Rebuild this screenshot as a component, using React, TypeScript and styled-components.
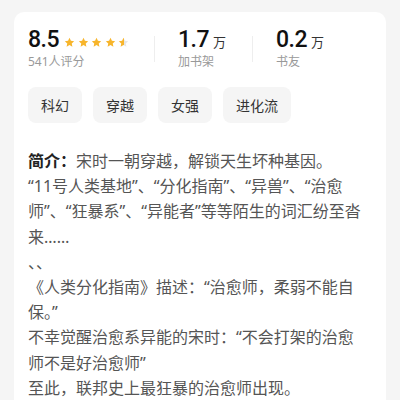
import React from 'react'
import styled, { createGlobalStyle } from 'styled-components'

const GlobalStyle = createGlobalStyle`
  body {
    margin: 0;
    background: #f5f5f5;
    font-family: "Noto Sans", "Noto Sans CJK SC", sans-serif;
  }
`
const Page = styled.div`
  padding: 12px 14px 0 14px;
`
const Card = styled.div`
  background: #fff;
  border-radius: 10px;
  padding: 14px 14px 20px 14px;
`
const StatsRow = styled.div`
  display: flex;
  align-items: center;
  padding-top: 2px;
`
const Stat = styled.div<{ $w?: number }>`
  width: ${p => (p.$w ? `${p.$w}px` : 'auto')};
  display: flex;
  flex-direction: column;
`
const Divider = styled.div`
  width: 1px;
  height: 26px;
  background: #eeeeee;
  margin-right: 23px;
`
const ValueLine = styled.div`
  display: flex;
  align-items: baseline;
  height: 24px;
`
const Value = styled.span`
  font-family: Roboto, sans-serif;
  font-weight: 500;
  font-size: 23px;
  line-height: 24px;
  color: #111;
  letter-spacing: -0.5px;
`
const Unit = styled.span`
  font-size: 13px;
  line-height: 18px;
  color: #333;
  margin-left: 4px;
`
const Label = styled.div`
  font-size: 12px;
  color: #999;
  margin-top: 2px;
  line-height: 16px;
`
const Stars = styled.div`
  display: flex;
  gap: 2.5px;
  margin-left: 5px;
  align-self: center;
  margin-top: 4px;
`
const Tags = styled.div`
  display: flex;
  gap: 11px;
  margin-top: 17px;
`
const Tag = styled.div`
  height: 36px;
  padding: 0 13px;
  border-radius: 8px;
  background: #f5f5f5;
  color: #333;
  font-size: 14px;
  display: flex;
  align-items: center;
`
const Intro = styled.div`
  margin-top: 25px;
  padding-right: 4px;
  font-size: 16px;
  line-height: 25.2px;
  color: #555;
  white-space: pre-wrap;
`
const IntroHead = styled.span`
  color: #222;
  font-weight: 700;
  font-family: "Noto Sans CJK SC", sans-serif;
`

function Star({ half = false }: { half?: boolean }) {
  return (
    <svg width="11" height="11" viewBox="0 0 24 24">
      <defs>
        <linearGradient id="halfStar">
          <stop offset="55%" stopColor="#f7b52c" />
          <stop offset="55%" stopColor="#e6e6e6" />
        </linearGradient>
      </defs>
      <path
        d="M12 1.8l3.1 6.6 7.1.8-5.3 4.9 1.4 7.1L12 17.6l-6.3 3.6 1.4-7.1-5.3-4.9 7.1-.8z"
        fill={half ? 'url(#halfStar)' : '#f7b52c'}
      />
    </svg>
  )
}

const intro = `宋时一朝穿越，解锁天生坏种基因。
“11号人类基地”、“分化指南”、“异兽”、“治愈师”、“狂暴系”、“异能者”等等陌生的词汇纷至沓来……
、、
《人类分化指南》描述：“治愈师，柔弱不能自保。”
不幸觉醒治愈系异能的宋时：“不会打架的治愈师不是好治愈师”
至此，联邦史上最狂暴的治愈师出现。`

export default function App() {
  return (
    <>
      <GlobalStyle />
      <Page>
        <Card>
          <StatsRow>
            <Stat $w={126}>
              <ValueLine>
                <Value>8.5</Value>
                <Stars>
                  <Star />
                  <Star />
                  <Star />
                  <Star />
                  <Star half />
                </Stars>
              </ValueLine>
              <Label>541人评分</Label>
            </Stat>
            <Divider />
            <Stat $w={74}>
              <ValueLine>
                <Value>1.7</Value>
                <Unit>万</Unit>
              </ValueLine>
              <Label>加书架</Label>
            </Stat>
            <Divider />
            <Stat>
              <ValueLine>
                <Value>0.2</Value>
                <Unit>万</Unit>
              </ValueLine>
              <Label>书友</Label>
            </Stat>
          </StatsRow>
          <Tags>
            <Tag>科幻</Tag>
            <Tag>穿越</Tag>
            <Tag>女强</Tag>
            <Tag>进化流</Tag>
          </Tags>
          <Intro>
            <IntroHead>简介：</IntroHead>
            {intro}
          </Intro>
        </Card>
      </Page>
    </>
  )
}
